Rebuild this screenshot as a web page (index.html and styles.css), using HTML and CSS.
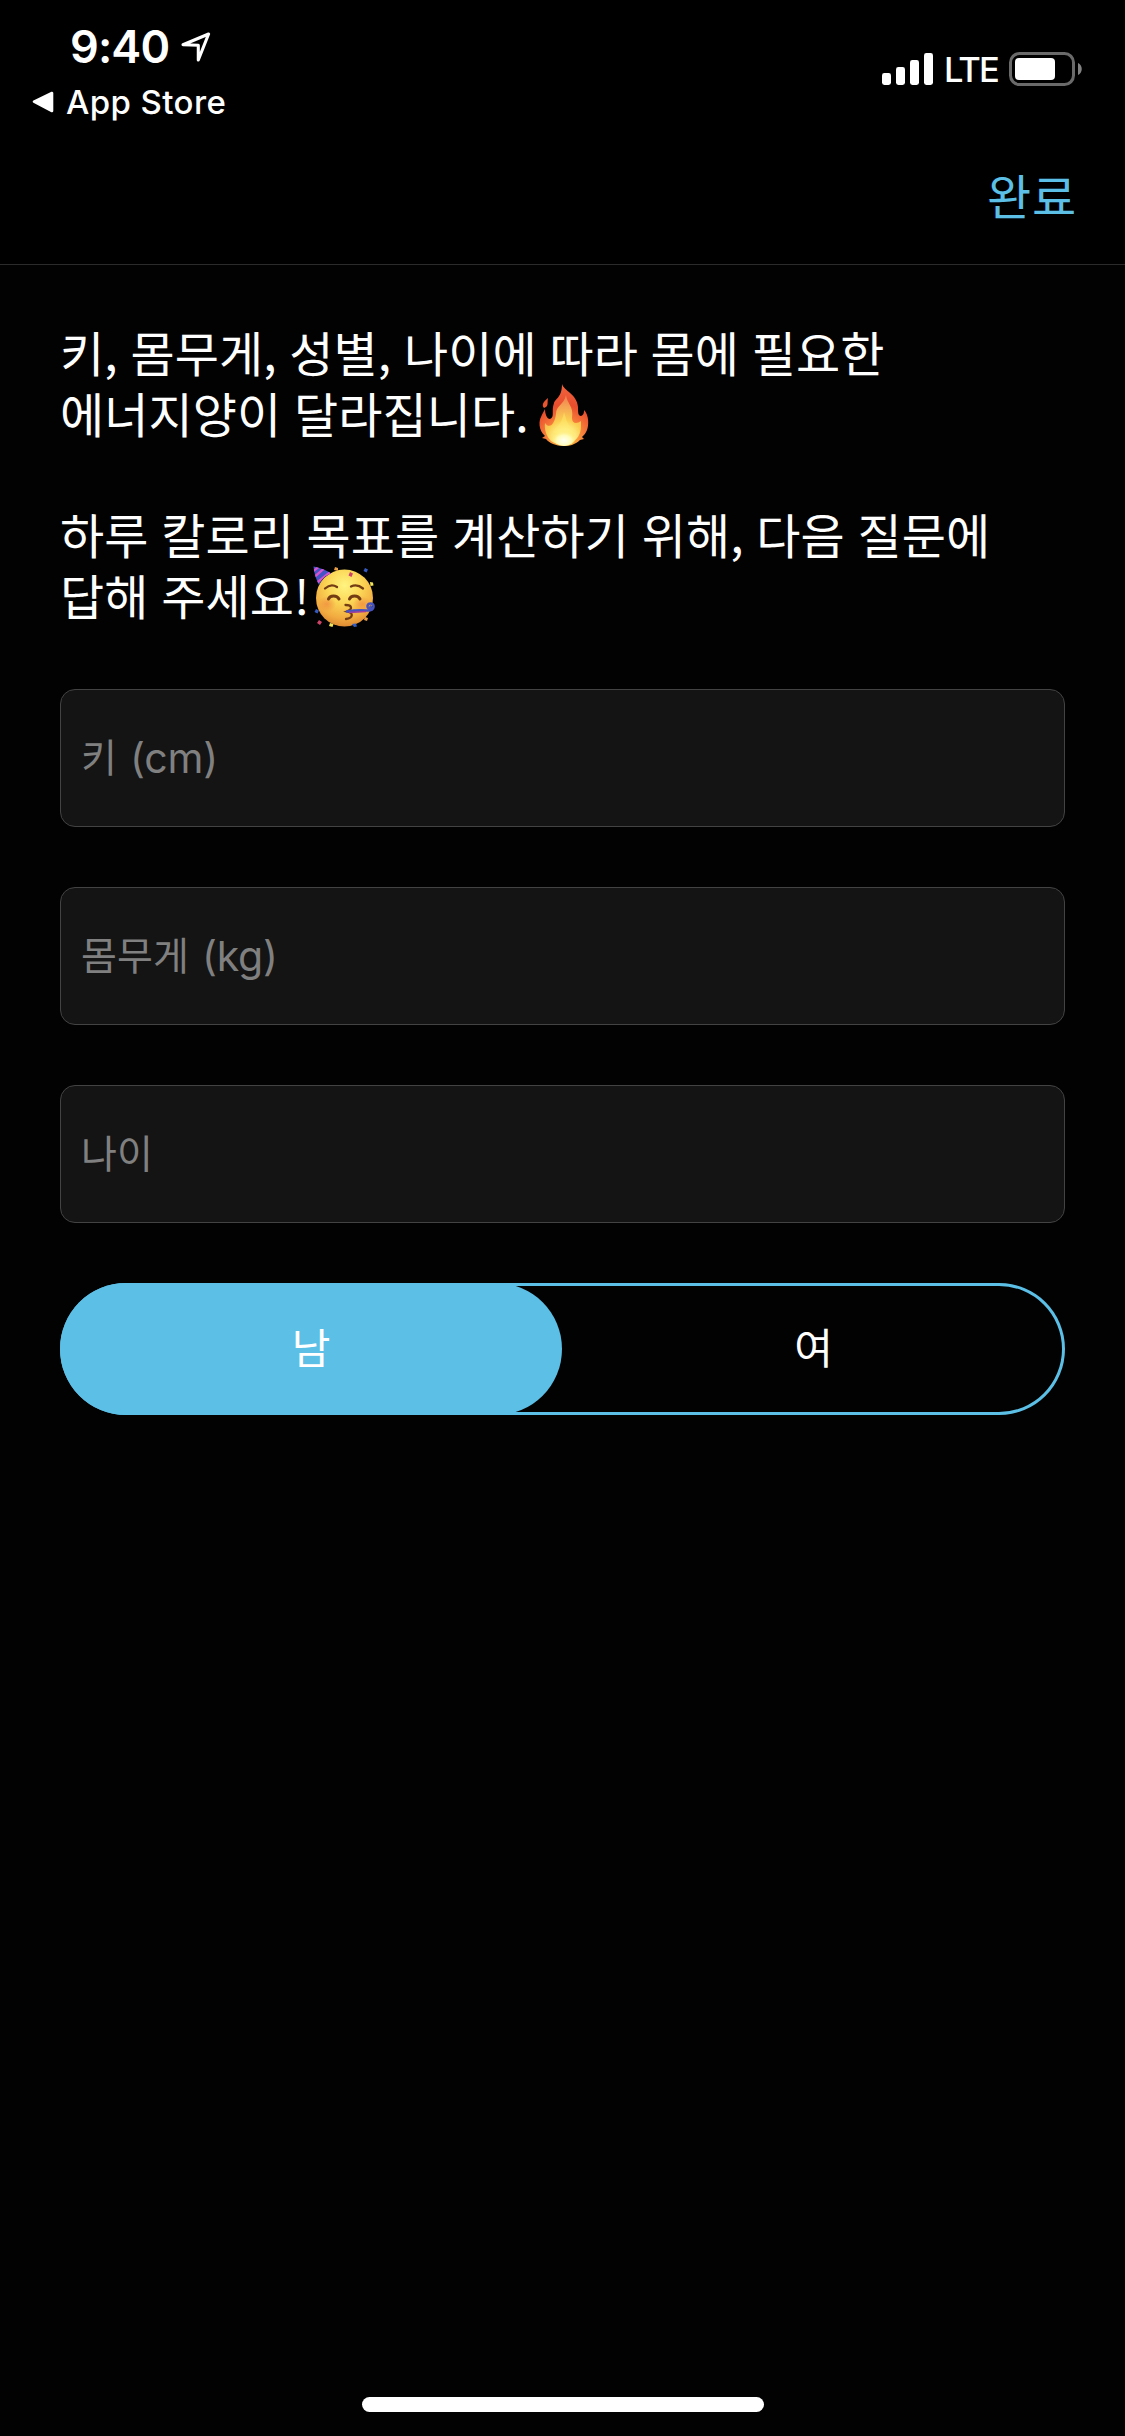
FILE: index.html
```html
<!DOCTYPE html>
<html lang="ko">
<head>
<meta charset="utf-8">
<title>하루 칼로리 목표</title>
<link rel="stylesheet" href="styles.css">
</head>
<body>
<div class="screen">
  <header class="header">
    <div class="status">
      <div class="status-left">
        <div class="clock"><span class="time">9:40</span>
          <svg class="location" viewBox="0 0 30 30" width="30" height="30"><path d="M2 12.8 27.6 2 17.3 28V13.3Z" fill="none" stroke="#fff" stroke-width="3.1" stroke-linejoin="round"/></svg>
        </div>
        <div class="back">
          <svg viewBox="0 0 22 22" width="22" height="22"><path d="M2 10.7 20 2V20Z" fill="#fff" stroke="#fff" stroke-width="2.6" stroke-linejoin="round"/></svg>
          <span class="back-label">App Store</span>
        </div>
      </div>
      <div class="status-right">
        <svg class="signal" viewBox="0 0 51 32" width="51" height="32" fill="#fff"><rect y="20" width="9" height="12" rx="2.4"/><rect x="14" y="14" width="9" height="18" rx="2.4"/><rect x="28" y="7" width="9" height="25" rx="2.4"/><rect x="42" width="9" height="32" rx="2.4"/></svg>
        <span class="network">LTE</span>
        <svg class="battery" viewBox="0 0 74 34" width="74" height="34"><rect x="1.5" y="1.5" width="63" height="31" rx="9" fill="none" stroke="#6a6a6a" stroke-width="3"/><rect x="6" y="6" width="40" height="22" rx="4" fill="#fff"/><path d="M69 11C74 13 74 21 69 23Z" fill="#828282"/></svg>
      </div>
    </div>
    <nav class="nav"><span class="done">완료</span></nav>
  </header>

  <main class="content">
    <div class="intro">
      <p>키, 몸무게, 성별, 나이에 따라 몸에 필요한</p>
      <p>에너지양이 달라집니다.<svg class="emoji fire" viewBox="0 0 62 62" width="62" height="62" role="img" aria-label="불">
        <defs>
          <radialGradient id="fire-outer" gradientUnits="userSpaceOnUse" cx="32" cy="55" r="52"><stop offset="0" stop-color="#ffcf3c"/><stop offset=".36" stop-color="#f7803b"/><stop offset=".65" stop-color="#e94d2d"/><stop offset="1" stop-color="#f0623c"/></radialGradient>
          <radialGradient id="fire-inner" gradientUnits="userSpaceOnUse" cx="31.5" cy="54" r="42"><stop offset="0" stop-color="#fffde0"/><stop offset=".18" stop-color="#fff79b"/><stop offset=".42" stop-color="#fbd052"/><stop offset=".75" stop-color="#f5a354"/><stop offset="1" stop-color="#ef8150"/></radialGradient>
          <radialGradient id="fire-core" cx=".5" cy=".7" r=".6"><stop offset="0" stop-color="#fffff4"/><stop offset=".5" stop-color="#fffcb8"/><stop offset="1" stop-color="#ffe15a" stop-opacity="0"/></radialGradient>
        </defs>
        <path d="M29 0C31 7 44 10 45 23C45 28 45 32 48 32C51 31 51 28 51 26C56 31 56 41 54 46C53 49 51 51 49 53L51 55L47 56C42 61 36 62 30.500 62C23 62 16 59 13 55L9 54L12 52C5 46 6 36 8 33C9 30 11 27 12 25C12 30 14 35 17 35C22 33 18 27 21 19C23 14 29 13 29 0Z" fill="url(#fire-outer)"/>
        <path d="M15 14C14 20 16 22 11 24C8 21 11 17 15 14Z" fill="#e9552f"/>
        <path d="M33 11C34 20 41 22 39 34C39 40 44 40 48 37C48 43 49 51 41 57C36 61 25 62 18 57C14 53 11 46 12 39C17 46 22 39 23 30C23 21 31 21 33 11Z" fill="url(#fire-inner)"/>
        <path d="M31 28C34 37 34 41 40 44C44 52 38 61 31 61C23 61 19 55 21 46C24 42 29 40 31 28Z" fill="#ffe96b" opacity=".5"/>
        <ellipse cx="31" cy="53" rx="12" ry="9" fill="url(#fire-core)"/>
      </svg></p>
      <p class="blank"></p>
      <p>하루 칼로리 목표를 계산하기 위해, 다음 질문에</p>
      <p>답해 주세요!<svg class="emoji party" viewBox="0 0 62 62" width="62" height="62" role="img" aria-label="파티">
        <defs>
          <radialGradient id="face" cx=".5" cy=".28" r=".74"><stop offset="0" stop-color="#fff480"/><stop offset=".42" stop-color="#fbd555"/><stop offset=".78" stop-color="#f2ab40"/><stop offset="1" stop-color="#dc8730"/></radialGradient>
          <radialGradient id="blush"><stop offset="0" stop-color="#ee793c" stop-opacity=".55"/><stop offset="1" stop-color="#ee793c" stop-opacity="0"/></radialGradient>
          <clipPath id="hat-shape"><path d="M.5.5C7 2 14 4 18 7.500Q9 11 6 19C3 13 1 7 .5.500Z"/></clipPath>
        </defs>
        <circle cx="31.500" cy="32" r="28.500" fill="url(#face)"/>
        <ellipse cx="14" cy="38" rx="9" ry="8" fill="url(#blush)"/><ellipse cx="49" cy="38" rx="9" ry="8" fill="url(#blush)"/>
        <g clip-path="url(#hat-shape)"><path d="M0 0H20V20H0Z" fill="#4355c5"/><path d="M-2 7 8-1M-1 13 14 0M1 19 20 4" stroke="#d951cf" stroke-width="2.300"/></g>
        <g fill="none" stroke="#733c14" stroke-width="2.300" stroke-linecap="round"><path d="M12 22.500Q18 17 24 21"/><path d="M38 20.500Q44 17.500 50 22.500"/><path d="M15.500 33C17 29 24 29 26 33" stroke-width="3"/><path d="M36.500 33C38 29 45 29 47 33" stroke-width="3"/><path d="M32.500 39C39 39 40 43 34 45.500C41 47 40 52 33 53"/></g>
        <path d="M34 45.500Q43 44 53 44.500Q60 45 60.500 41C61 37 55 36 54.500 40C54.500 43 58 42.500 57.500 40.500" fill="none" stroke="#4653bd" stroke-width="2.500" stroke-linecap="round"/>
        <path d="M36 46.500 53 45.500" stroke="#9f3c9e" stroke-width="1.300"/>
        <g fill="#345bc2"><path d="m52 2 3 1.500-1.500 3-3-1.500zM3 43l3 1.500L4.500 47.500l-3-1.500zM39 58l4-.5 1 3-3 .5z"/></g>
        <g fill="#ce4468"><path d="m37 6 3 1.500L38.500 11l-3-1.500zM6 54l3 2-2 3-3-2z"/></g>
        <g fill="#f2e55a"><path d="m57 16 3 .5.500 3-3 .5zM17 57l3.500 1-1 3-3.500-1z"/></g>
        <g fill="#e89d45"><path d="m22 1 3 1v3l-4-1zM52 51l3 1-1 3-3-1z"/></g>
      </svg></p>
    </div>

    <div class="fields">
      <div class="field">키<span class="unit">(cm)</span></div>
      <div class="field">몸무게<span class="unit">(kg)</span></div>
      <div class="field">나이</div>
    </div>

    <div class="segments">
      <div class="segment selected">남</div>
      <div class="segment">여</div>
    </div>
  </main>

  <footer class="home"><div class="home-bar"></div></footer>
</div>
</body>
</html>
```
FILE: styles.css
```css
* { box-sizing: border-box; }

body {
  margin: 0;
  background: #020202;
  color: #fff;
  font-family: "Noto Sans CJK KR", sans-serif;
}

svg { display: block; flex: none; }

.screen {
  width: 1125px;
  height: 2436px;
  display: flex;
  flex-direction: column;
  overflow: hidden;
}

.header {
  height: 265px;
  background: #000;
  border-bottom: 1px solid #2b2b2b;
}

.status {
  height: 132px;
  display: flex;
  justify-content: space-between;
  padding: 0 42px 0 32px;
  font-family: Inter, sans-serif;
}

.status-left { padding-top: 20px; }

.clock {
  display: flex;
  height: 54px;
  padding-left: 38px;
}

.time {
  width: 111px;
  font-size: 45px;
  font-weight: 600;
  line-height: 54px;
  letter-spacing: -0.9px;
}

.location { margin-top: 12px; }

.back {
  display: flex;
  align-items: center;
  height: 56px;
  gap: 12px;
}

.back-label {
  font-size: 33px;
  font-weight: 500;
  letter-spacing: 0.4px;
}

.status-right {
  display: flex;
  align-items: center;
  height: 138px;
}

.network {
  width: 76px;
  padding-left: 11px;
  font-size: 34.5px;
  font-weight: 450;
  letter-spacing: -1.9px;
}

.nav {
  display: flex;
  justify-content: flex-end;
  padding: 26px 48px 0;
}

.done {
  color: #5bbfe6;
  font-size: 48px;
  line-height: 72px;
  letter-spacing: 0.8px;
}

.content { padding: 56px 60px 0; }

.intro {
  font-size: 48px;
  line-height: 61px;
  letter-spacing: 0.1px;
  word-spacing: -0.9px;
  white-space: nowrap;
}

.intro p {
  display: flex;
  height: 60.8px;
  margin: 0;
  white-space: pre;
}

.fire { margin: 2px 0 0 4px; }
.party { margin: 2px 0 0 3px; }

.fields {
  display: grid;
  gap: 60px;
  margin-top: 64px;
}

.field {
  display: flex;
  align-items: center;
  height: 138px;
  padding: 0 20px 5px;
  background: #141414;
  border: 1px solid #434343;
  border-radius: 15px;
  color: #808080;
  font-size: 39px;
  letter-spacing: 0.1px;
}

.unit {
  margin-left: 13px;
  padding-top: 6px;
  font-family: Inter, sans-serif;
  font-size: 41px;
  letter-spacing: -0.2px;
}

.segments {
  display: grid;
  grid-template-columns: 502px 503px;
  height: 132px;
  margin-top: 60px;
  border-radius: 66px;
  box-shadow: inset 0 0 0 3px #5bbfe6;
}

.segment {
  display: flex;
  align-items: center;
  justify-content: center;
  padding-bottom: 7px;
  border-radius: 66px;
  font-size: 42px;
}

.selected { background: #5bbfe6; }

.home {
  display: flex;
  justify-content: center;
  margin-top: auto;
  padding-bottom: 24px;
}

.home-bar {
  width: 402px;
  height: 15px;
  border-radius: 8px;
  background: #fff;
}
```
